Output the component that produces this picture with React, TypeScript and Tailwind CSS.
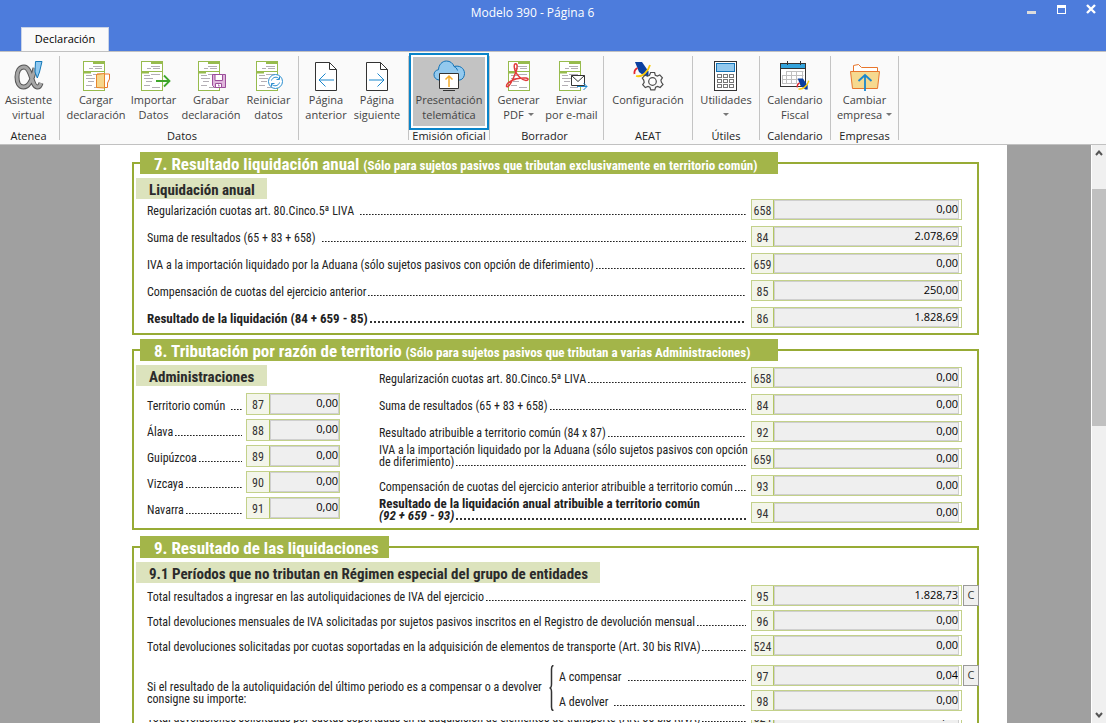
import React from 'react';
import clsx from 'clsx';

type RowProps = {
  id: string;
  code: string;
  value: string;
  label: React.ReactNode;
  firstLine?: string;
  bold?: boolean;
  italic?: boolean;
  spaced?: boolean;
  withButton?: boolean;
  small?: boolean;
};

/* ---------- Ribbon icons ---------- */

const Icon = ({ children }: { children: React.ReactNode }) => (
  <svg viewBox="0 0 36 32" className="h-8 w-9 shrink-0" fill="none" aria-hidden="true">
    {children}
  </svg>
);

const FormSheet = () => (
  <g>
    <rect x="5.5" y="1.5" width="21" height="29" fill="#fff" stroke="#97bb4d" />
    <path d="M15 1h12v3H15zM5 11h22v1H5zM5 12h8v1.5H5z" fill="#97bb4d" />
    <path d="M15 6.5h9M11 8.500h4M17 8.500h7M8 15.500h6M15 14.500h9M8 18.500h9M10 21.500h6M8 25.500h6M16 27.500h8" stroke="#b3aeb5" />
  </g>
);

const AlphaIcon = () => (
  <Icon>
    {[['#555', 5], ['#a6a6a6', 3]].map(([color, width]) => (
      <g key={color} stroke={color as string} strokeWidth={width}>
        <path d="M24 8c-1.500 7-5 19-11.500 19-4.500 0-6.500-4.500-6.500-10S8.500 7 13 7c7.500 0 7.500 19.500 13 20 2.200.2 3.300-1.500 4-4" />
      </g>
    ))}
    <path d="M24.500 1.500H31L28.500 12l-2.200 6L24 12z" fill="#8fc8f0" stroke="#1579b8" />
  </Icon>
);

const LoadIcon = () => (
  <Icon>
    <FormSheet />
    <path d="M19 14h12.500v5l-2 4v4.500H19z" fill="#fff" stroke="#e8762c" />
    <path d="M18.500 14.500l8-1v14.500l-8-.5z" fill="#f6d68c" stroke="#e8862c" />
  </Icon>
);

const ImportIcon = () => (
  <Icon>
    <FormSheet />
    <path d="M20 21h13M28 15.500l5.500 5.500-5.500 5.500" stroke="#3fa62b" strokeWidth="1.800" />
  </Icon>
);

const SaveIcon = () => (
  <Icon>
    <FormSheet />
    <path d="M19.500 14.500h13v13h-11l-2-2z" fill="#e0b6dc" stroke="#9b4f9b" />
    <path d="M22 14.500h7.500v6H22zM22.500 23.500h6v4h-6z" fill="#fff" stroke="#9b4f9b" />
    <path d="M25 25h1v1.500" stroke="#9b4f9b" />
  </Icon>
);

const ResetIcon = () => (
  <Icon>
    <FormSheet />
    <circle cx="24.500" cy="21.500" r="7" fill="#fff" stroke="#2b8fd0" />
    <path d="M20.500 20.500c1-3.500 5.500-4.500 7.800-1.500M28.500 16.500v3h-3M28.500 22.500c-1 3.500-5.500 4.500-7.800 1.500M20.500 26.500v-3h3" stroke="#2b8fd0" />
  </Icon>
);

const PageIcon = ({ next }: { next?: boolean }) => (
  <Icon>
    <path d="M7.500 2.500h14l7 7v21h-21z" fill="#fff" stroke="#333" />
    <path d="M21.500 2.500v7h7" stroke="#333" />
    {next ? (
      <path d="M10 20h15M18.500 13.500L25 20l-6.500 6.500" stroke="#1b87cd" />
    ) : (
      <path d="M11 20h15M17.500 13.500L11 20l6.500 6.500" stroke="#1b87cd" />
    )}
  </Icon>
);

const CloudIcon = () => (
  <Icon>
    <path d="M8 20c-3-.3-5-2.500-5-5.300 0-2.700 1.900-4.700 4.500-5C7.600 5 11 1 15.500 1c3.600 0 6.500 2.200 7.500 5.500 5.400-1.500 10.500 1.500 10.500 7 0 3-1.700 6-4.500 6.500z" fill="#93c9ee" stroke="#1272b6" />
    <path d="M23 6.500c1.500.5 3 2 3.500 4" stroke="#1272b6" />
    <path d="M8.500 13.500h19v15h-19z" fill="#fff" stroke="#333" />
    <path d="M12 30.500h12" stroke="#333" />
    <path d="M18 27V16M14.500 19.500L18 16l3.500 3.500" stroke="#f3ac2c" strokeWidth="1.500" />
  </Icon>
);

const PdfIcon = () => (
  <Icon>
    <g transform="translate(2 0)">
      <FormSheet />
    </g>
    <path d="M14 4c2.500-1 3 3 .5 9-2 5-5 12-7.500 13.500-2 1-2-1.500 0-3.500 4-4 13-5.500 18-5 3 .3 2.500 2.500 0 2.500-4-.2-9-5-11-10C13 7 12.700 4.800 14 4z" stroke="#e23b3b" strokeWidth="1.500" />
  </Icon>
);

const MailIcon = () => (
  <Icon>
    <FormSheet />
    <path d="M17.500 15.500h13v10h-13z" fill="#fff" stroke="#333" />
    <path d="M17.500 15.500l6.500 6 6.500-6" stroke="#333" />
    <path d="M23 26.500h10M29.500 23l3.500 3.500-3.500 3.500" stroke="#1b87cd" />
  </Icon>
);

const AgencyMark = () => (
  <g>
    <path d="M5 2h7l6.500 9.500V17h-3L9 12z" fill="#0a3fa0" />
    <path d="M4.500 14c-.5-3 1-5 3-6" stroke="#e3262e" strokeWidth="1.800" />
    <path d="M6 16c6 1.500 12-4 14-11" stroke="#fccb0b" strokeWidth="1.800" />
  </g>
);

const SettingsIcon = () => (
  <Icon>
    <AgencyMark />
    <path d="M20.600 12.500h4l.7 2.700 2 .9 2.500-1.200 2.600 2.900-1.500 2.300.5 2.200 1.600 2.200-2.800 3-2.600-1.100-2 .9-.8 2.600h-4l-.9-2.600-1.900-.9-2.700 1.200-2.600-3 1.500-2.300-.5-2.200-1.400-2.100 2.700-2.900 2.500 1.100 2-.9z" fill="#fafafa" stroke="#4d4d4d" strokeWidth="1.200" />
    <circle cx="22.500" cy="21.500" r="3.800" fill="#fff" stroke="#4d4d4d" strokeWidth="1.200" />
  </Icon>
);

const CalculatorIcon = () => (
  <Icon>
    <rect x="6.500" y="1.500" width="22" height="29" fill="#fff" stroke="#333" />
    <rect x="8.500" y="3.500" width="18" height="8" fill="#93c9ee" stroke="#1272b6" />
    {[14.5, 19.5, 24.5].map((y) =>
      [9.5, 15.5, 21.5].map((x) => <rect key={`${x}-${y}`} x={x} y={y} width="4" height="3" stroke="#777" />),
    )}
  </Icon>
);

const CalendarIcon = () => (
  <Icon>
    <rect x="3.500" y="3.500" width="25" height="23" fill="#fff" stroke="#333" />
    <path d="M4 4h24v4H4z" fill="#33a3dc" />
    <path d="M3 8.500h26M10.500 1v4M23.500 1v4" stroke="#333" />
    <path d="M9.500 11.500h17M5.500 15.500h21M5.500 19.500h21M5.500 23.500h15M9.500 11v13M14.500 11v13M19.500 11v13M25.500 11v9M5.500 15v9" stroke="#c0c0c0" />
    <g transform="translate(17 17) scale(.74)">
      <AgencyMark />
    </g>
  </Icon>
);

const FolderIcon = () => (
  <Icon>
    <path d="M6.500 12V5.500l5-1 3 3h16V12" fill="#fff" stroke="#e8762c" />
    <path d="M3.500 11.500h29l-2 17H5.500z" fill="#f6d98f" stroke="#e8762c" />
    <path d="M18 31V15.500M11.500 21L18 15l6.500 6" stroke="#1b87cd" strokeWidth="1.800" />
  </Icon>
);

/* ---------- Ribbon ---------- */

const Caret = () => (
  <svg viewBox="0 0 6 3" className="inline-block h-[3px] w-[6px] align-middle" aria-hidden="true">
    <path d="M0 0h6L3 3z" fill="#777" />
  </svg>
);

const RibbonButton = ({
  icon,
  line1,
  line2,
  caret,
  active,
  className,
}: {
  icon: React.ReactNode;
  line1: string;
  line2?: string;
  caret?: boolean;
  active?: boolean;
  className?: string;
}) => {
  const content = (
    <>
      {icon}
      <span className="block">{line1}</span>
      <span className="flex h-[15px] items-center gap-1">
        {line2}
        {caret && <Caret />}
      </span>
    </>
  );
  if (active) {
    return (
      <button type="button" className="relative z-10 mt-px h-[77px] w-20 shrink-0 border-2 border-[#0a84c9] bg-white p-[2px] leading-[15px] text-[#444]">
        <span className="flex h-full flex-col items-center whitespace-nowrap bg-[#c3c3c3] pt-[3px]">{content}</span>
      </button>
    );
  }
  return (
    <button type="button" className={clsx('flex shrink-0 flex-col items-center whitespace-nowrap pt-2 leading-[15px] text-[#444]', className)}>
      {content}
    </button>
  );
};

const RibbonGroup = ({ title, className, children }: { title?: string; className: string; children: React.ReactNode }) => (
  <>
    <div className={clsx('flex shrink-0 flex-col', className)}>
      <div className="flex h-[77px] justify-center">{children}</div>
      {title && <div className="whitespace-nowrap text-center leading-[14px] text-[#222]">{title}</div>}
    </div>
    <div className="my-1 w-px shrink-0 bg-[#c4c4c4]" />
  </>
);

const Ribbon = () => (
  <div className="flex h-[94px] shrink-0 border-y border-[#c1c1c1] bg-[#fafafa] text-[11px]">
    <RibbonGroup title="Atenea" className="w-[59px] pr-[2px]">
      <RibbonButton className="w-[57px]" icon={<AlphaIcon />} line1="Asistente" line2="virtual" />
    </RibbonGroup>
    <RibbonGroup title="Datos" className="w-[238px] pl-[6px]">
      <RibbonButton className="w-[58px]" icon={<LoadIcon />} line1="Cargar" line2="declaración" />
      <RibbonButton className="w-[57px]" icon={<ImportIcon />} line1="Importar" line2="Datos" />
      <RibbonButton className="w-[58px]" icon={<SaveIcon />} line1="Grabar" line2="declaración" />
      <RibbonButton className="w-[57px]" icon={<ResetIcon />} line1="Reiniciar" line2="datos" />
    </RibbonGroup>
    <RibbonGroup className="w-[109px] pr-1">
      <RibbonButton className="w-[51px]" icon={<PageIcon />} line1="Página" line2="anterior" />
      <RibbonButton className="w-[51px]" icon={<PageIcon next />} line1="Página" line2="siguiente" />
    </RibbonGroup>
    <RibbonGroup title="Emisión oficial" className="w-20">
      <RibbonButton active icon={<CloudIcon />} line1="Presentación" line2="telemática" />
    </RibbonGroup>
    <RibbonGroup title="Borrador" className="w-[113px] pr-1">
      <RibbonButton className="w-[54px]" icon={<PdfIcon />} line1="Generar" line2="PDF" caret />
      <RibbonButton className="w-[52px]" icon={<MailIcon />} line1="Enviar" line2="por e-mail" />
    </RibbonGroup>
    <RibbonGroup title="AEAT" className="w-[88px]">
      <RibbonButton className="w-20" icon={<SettingsIcon />} line1="Configuración" />
    </RibbonGroup>
    <RibbonGroup title="Útiles" className="w-[66px]">
      <RibbonButton className="w-[60px]" icon={<CalculatorIcon />} line1="Utilidades" caret />
    </RibbonGroup>
    <RibbonGroup title="Calendario" className="w-[70px]">
      <RibbonButton className="w-[60px]" icon={<CalendarIcon />} line1="Calendario" line2="Fiscal" />
    </RibbonGroup>
    <RibbonGroup title="Empresas" className="w-[67px]">
      <RibbonButton className="w-[60px]" icon={<FolderIcon />} line1="Cambiar" line2="empresa" caret />
    </RibbonGroup>
  </div>
);

/* ---------- Form ---------- */

const Leader = ({ bold }: { bold?: boolean }) => (
  <span
    className={clsx(
      'mb-[2px] ml-[2px] min-w-0 flex-1 self-end bg-repeat-x',
      bold
        ? 'h-[2px] bg-[linear-gradient(to_right,#333_2px,transparent_2px)] bg-[length:4px_2px]'
        : 'h-px bg-[linear-gradient(to_right,#222_1px,#ccc_2px,transparent_2px)] bg-[length:3px_1px]',
    )}
  />
);

const FormRow = ({ id, code, value, label, firstLine, bold, italic, spaced, withButton, small }: RowProps) => (
  <div className={clsx('flex items-center', small ? 'h-[22px]' : 'h-[21px]')}>
    <label
      htmlFor={id}
      className={clsx(
        'min-w-0 flex-1 whitespace-nowrap leading-[12px]',
        firstLine ? 'pb-[6px]' : 'pt-[3px]',
        bold ? 'text-[13px] font-bold' : 'text-xs',
        small ? 'pr-1' : 'pr-[5px]',
      )}
    >
      {firstLine && <span className="block">{firstLine}</span>}
      <span className={clsx('flex', italic && 'italic', spaced && 'gap-1')}>
        {label}
        <Leader bold={bold} />
      </span>
    </label>
    <div className={clsx('flex h-full shrink-0 border border-[#c3d18a] bg-white text-[#333]', small ? 'w-[94px]' : 'w-[211px]')}>
      <span className={clsx('flex shrink-0 items-center justify-center border-r border-[#b3c661] bg-[#f3f5ea] pt-[2px] text-xs', small ? 'w-[23px]' : 'w-[22px]')}>{code}</span>
      <input
        id={id}
        readOnly
        value={value}
        className={clsx("min-w-0 flex-1 border border-[#cfcfcf] bg-[#efefef] pb-px text-right font-['Open_Sans',sans-serif] text-[11px] text-black outline-none", !small && 'mr-[2px]')}
      />
    </div>
    {!small && (
      <div className="ml-px flex h-full w-[14px] shrink-0">
        {withButton && (
          <button type="button" className="h-full w-4 shrink-0 border border-[#999] bg-[#f0f0f0] font-['Open_Sans',sans-serif] text-[11px] text-[#333]">C</button>
        )}
      </div>
    )}
  </div>
);

const SectionTitle = ({ title, note, className }: { title: string; note?: string; className: string }) => (
  <h2 className={clsx('-mt-3 ml-[6px] h-[22px] whitespace-nowrap bg-[#a3b549] pl-[14px] text-[17px] leading-[24px] font-bold text-white', className)}>
    {title} {note && <span className="text-[13px]">{note}</span>}
  </h2>
);

const SubTitle = ({ children, className }: { children: React.ReactNode; className: string }) => (
  <h3 className={clsx('mt-1 ml-[2px] h-[21px] whitespace-nowrap bg-[#dce3bd] pl-[13px] text-[15px] leading-[25px] font-bold text-[#2b2b2b]', className)}>{children}</h3>
);

const Section7 = () => (
  <section className="mt-[17px] border-2 border-[#97ab35] pb-[5px]">
    <SectionTitle className="w-[638px]" title="7. Resultado liquidación anual" note="(Sólo para sujetos pasivos que tributan exclusivamente en territorio común)" />
    <SubTitle className="w-[131px]">Liquidación anual</SubTitle>
    <div className="flex flex-col gap-[6px] pl-[13px]">
      <FormRow id="s7-658" code="658" value="0,00" spaced label="Regularización cuotas art. 80.Cinco.5ª LIVA" />
      <FormRow id="s7-84" code="84" value="2.078,69" spaced label="Suma de resultados (65 + 83 + 658)" />
      <FormRow id="s7-659" code="659" value="0,00" label="IVA a la importación liquidado por la Aduana (sólo sujetos pasivos con opción de diferimiento)" />
      <FormRow id="s7-85" code="85" value="250,00" label="Compensación de cuotas del ejercicio anterior" />
      <FormRow id="s7-86" code="86" value="1.828,69" bold label="Resultado de la liquidación (84 + 659 - 85)" />
    </div>
  </section>
);

const Section8 = () => (
  <section className="mt-[14px] border-2 border-[#97ab35] pb-[5px]">
    <SectionTitle className="w-[638px]" title="8. Tributación por razón de territorio" note="(Sólo para sujetos pasivos que tributan a varias Administraciones)" />
    <div className="flex">
      <div className="w-[206px] shrink-0">
        <SubTitle className="w-[131px]">Administraciones</SubTitle>
        <div className="mt-[7px] flex flex-col gap-1 pl-[13px]">
          <FormRow small id="s8-87" code="87" value="0,00" spaced label="Territorio común" />
          <FormRow small id="s8-88" code="88" value="0,00" label="Álava" />
          <FormRow small id="s8-89" code="89" value="0,00" label="Guipúzcoa" />
          <FormRow small id="s8-90" code="90" value="0,00" label="Vizcaya" />
          <FormRow small id="s8-91" code="91" value="0,00" label="Navarra" />
        </div>
      </div>
      <div className="mt-[6px] ml-[39px] flex min-w-0 flex-1 flex-col gap-[6px]">
        <FormRow id="s8-658" code="658" value="0,00" label="Regularización cuotas art. 80.Cinco.5ª LIVA" />
        <FormRow id="s8-84" code="84" value="0,00" label="Suma de resultados (65 + 83 + 658)" />
        <FormRow id="s8-92" code="92" value="0,00" label="Resultado atribuible a territorio común (84 x 87)" />
        <FormRow id="s8-659" code="659" value="0,00" firstLine="IVA a la importación liquidado por la Aduana (sólo sujetos pasivos con opción" label="de diferimiento)" />
        <FormRow id="s8-93" code="93" value="0,00" label="Compensación de cuotas del ejercicio anterior atribuible a territorio común" />
        <FormRow id="s8-94" code="94" value="0,00" bold italic firstLine="Resultado de la liquidación anual atribuible a territorio común" label="(92 + 659 - 93)" />
      </div>
    </div>
  </section>
);

const Section9 = () => (
  <section className="mt-4 flex-1 border-2 border-b-0 border-[#97ab35]">
    <SectionTitle className="w-[249px]" title="9. Resultado de las liquidaciones" />
    <SubTitle className="w-[464px]">9.1 Períodos que no tributan en Régimen especial del grupo de entidades</SubTitle>
    <div className="pt-[2px] pl-[13px]">
      <div className="flex flex-col gap-1">
        <FormRow id="s9-95" code="95" value="1.828,73" withButton label="Total resultados a ingresar en las autoliquidaciones de IVA del ejercicio" />
        <FormRow id="s9-96" code="96" value="0,00" label="Total devoluciones mensuales de IVA solicitadas por sujetos pasivos inscritos en el Registro de devolución mensual" />
        <FormRow id="s9-524" code="524" value="0,00" label="Total devoluciones solicitadas por cuotas soportadas en la adquisición de elementos de transporte (Art. 30 bis RIVA)" />
      </div>
      <div className="mt-[9px] flex">
        <p className="w-[402px] shrink-0 pt-4 text-xs leading-[12px]">
          Si el resultado de la autoliquidación del último periodo es a compensar o a devolver
          <br />
          consigne su importe:
        </p>
        <svg viewBox="0 0 5 46" className="h-[46px] w-[5px] shrink-0" fill="none" aria-hidden="true">
          <path d="M4.500.5C2.500.5 2.500 2 2.500 4v15c0 2.500-.5 4-2 4 1.500 0 2 1.500 2 4v15c0 2 0 3.500 2 3.500" stroke="#333" strokeWidth="1.500" />
        </svg>
        <div className="ml-[5px] flex min-w-0 flex-1 flex-col gap-1">
          <FormRow id="s9-97" code="97" value="0,04" withButton spaced label="A compensar" />
          <FormRow id="s9-98" code="98" value="0,00" spaced label="A devolver" />
        </div>
      </div>
      <div className="mt-[9px] flex h-[7px] flex-col justify-end overflow-hidden">
        <FormRow id="s9-524b" code="524" value="0,00" label="Total devoluciones solicitadas por cuotas soportadas en la adquisición de elementos de transporte (Art. 30 bis RIVA)" />
      </div>
    </div>
  </section>
);

const TitleBar = () => (
  <header className="flex h-[51px] shrink-0 items-end justify-between bg-[#4d7cdc]">
    <div className="flex-1 pl-[21px]">
      <button type="button" className="block h-6 w-[88px] border border-b-0 border-[#c9d3e6] bg-[#fafafa] text-[11px] text-black">Declaración</button>
    </div>
    <h1 className="self-start pt-1 pr-[42px] text-xs leading-[18px] text-white">Modelo 390 - Página 6</h1>
    <div className="flex flex-1 items-start justify-end gap-5 self-start pt-1 pr-[10px] pl-[10px]">
      <button type="button" aria-label="Minimizar" className="h-[10px] w-[10px]">
        <span className="mt-[7px] block h-[3px] w-[9px] bg-[#dcdcdc]" />
      </button>
      <button type="button" aria-label="Maximizar" className="mt-px h-[9px] w-[9px] border border-t-[3px] border-white" />
      <button type="button" aria-label="Cerrar" className="h-[10px] w-[10px]">
        <svg viewBox="0 0 10 10" className="h-[10px] w-[10px]" fill="none">
          <path d="M1 1l8 8M9 1L1 9" stroke="#fff" strokeWidth="2.400" />
        </svg>
      </button>
    </div>
  </header>
);

const ScrollBar = () => (
  <div className="flex w-[15px] shrink-0 flex-col items-center border-l border-white bg-[#f0f0f0] py-1">
    <svg viewBox="0 0 8 6" className="mt-px h-[6px] w-2 shrink-0" fill="none" aria-hidden="true">
      <path d="M1 5l3-3.500L7 5" stroke="#555" strokeWidth="2" />
    </svg>
    <div className="mt-[33px] h-[237px] w-full bg-[#c0c0c0]" />
    <svg viewBox="0 0 8 6" className="mt-auto mb-px h-[6px] w-2 shrink-0" fill="none" aria-hidden="true">
      <path d="M1 1l3 3.500L7 1" stroke="#555" strokeWidth="2" />
    </svg>
  </div>
);

const App = () => {
  return (
    <div className="flex h-screen flex-col overflow-hidden bg-[#a0a0a0] font-['Open_Sans',sans-serif]">
      <TitleBar />
      <Ribbon />
      <div className="flex min-h-0 flex-1">
        <main className="flex min-w-0 flex-1 overflow-hidden pr-[84px] pl-[100px]">
          <div className="flex min-w-0 flex-1 flex-col bg-white pr-7 pl-8 font-['Roboto_Condensed','Liberation_Sans_Narrow',sans-serif] text-[#222]">
            <Section7 />
            <Section8 />
            <Section9 />
          </div>
        </main>
        <ScrollBar />
      </div>
    </div>
  );
};

export default App;
